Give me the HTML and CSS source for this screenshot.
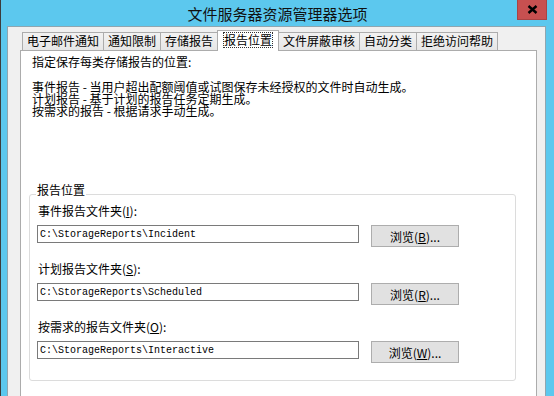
FILE: index.html
```html
<!DOCTYPE html>
<html lang="zh-CN">
<head>
  <meta charset="UTF-8">
  <title>文件服务器资源管理器选项</title>
  <link rel="stylesheet" href="styles.css">
</head>
<body>
  <div class="window">
    <div class="titlebar">
      <h1 class="title">文件服务器资源管理器选项</h1>
      <button class="close" aria-label="关闭">
        <svg width="11" height="9" viewBox="0 0 11 9">
          <path d="M1.5 1 L9.5 8 M9.5 1 L1.5 8" stroke="#000" stroke-width="2.4" fill="none"/>
        </svg>
      </button>
    </div>

    <div class="client">
      <ul class="tabs">
        <li>电子邮件通知</li>
        <li>通知限制</li>
        <li>存储报告</li>
        <li class="active"><span class="focus">报告位置</span></li>
        <li>文件屏蔽审核</li>
        <li>自动分类</li>
        <li>拒绝访问帮助</li>
      </ul>

      <div class="panel">
        <p class="intro">指定保存每类存储报告的位置:</p>
        <ul class="kinds">
          <li>事件报告 - 当用户超出配额阈值或试图保存未经授权的文件时自动生成。</li>
          <li>计划报告 - 基于计划的报告任务定期生成。</li>
          <li>按需求的报告 - 根据请求手动生成。</li>
        </ul>

        <fieldset class="group">
          <legend>报告位置</legend>

          <div class="field">
            <label for="incident">事件报告文件夹(<u>I</u>):</label>
            <div class="row">
              <input class="path" type="text" id="incident" value="C:\StorageReports\Incident">
              <button class="browse">浏览(<u>B</u>)...</button>
            </div>
          </div>

          <div class="field">
            <label for="scheduled">计划报告文件夹(<u>S</u>):</label>
            <div class="row">
              <input class="path" type="text" id="scheduled" value="C:\StorageReports\Scheduled">
              <button class="browse">浏览(<u>R</u>)...</button>
            </div>
          </div>

          <div class="field">
            <label for="interactive">按需求的报告文件夹(<u>O</u>):</label>
            <div class="row">
              <input class="path" type="text" id="interactive" value="C:\StorageReports\Interactive">
              <button class="browse">浏览(<u>W</u>)...</button>
            </div>
          </div>
        </fieldset>
      </div>
    </div>
  </div>
</body>
</html>
```

FILE: styles.css
```css
* {
  box-sizing: border-box;
}

body {
  margin: 0;
  font-family: "Noto Sans CJK SC", sans-serif;
  font-size: 12px;
  color: #000;
  background: #5cc8ee;
}

.window {
  width: 554px;
  height: 396px;
  overflow: hidden;
  display: flex;
  flex-direction: column;
  background: #5cc8ee;
  border-left: 1px solid #3c3c3c;
}

.titlebar {
  display: grid;
  grid-template-columns: 1fr auto 1fr;
  align-items: start;
  height: 26px;
  flex: none;
}

.title {
  grid-column: 2;
  margin: 0;
  font-size: 15px;
  font-weight: normal;
  line-height: 28px;
  color: #111;
}

.close {
  grid-column: 3;
  justify-self: end;
  margin-right: 7px;
  width: 30px;
  height: 20px;
  padding: 0;
  border: 1px solid #a84444;
  border-top: none;
  background: #c75050;
  display: flex;
  align-items: center;
  justify-content: center;
}

.client {
  flex: 1;
  margin: 0 8px 0 6px;
  padding: 3px 8px 0 12px;
  background: #f0f0f0;
  border: 1px solid #8fa6b0;
  border-bottom: none;
}

/* tab strip */
.tabs {
  list-style: none;
  display: flex;
  align-items: flex-end;
  height: 21px;
  margin: 0 0 -1px;
  padding: 0 0 0 2px;
}

.tabs li {
  height: 18px;
  margin: 0 -1px 1px 0;
  padding: 0 4px;
  border: 1px solid #acacac;
  border-bottom: none;
  background: linear-gradient(#f2f2f2, #e6e6e6);
  line-height: 16px;
  white-space: nowrap;
}

.tabs li.active {
  position: relative;
  z-index: 1;
  height: 21px;
  margin-bottom: 0;
  padding: 1px 5px 0;
  background: #fff;
  line-height: 14px;
}

.focus {
  display: inline-block;
  border: 1px dotted #333;
}

.panel {
  height: 360px;
  padding: 4px 0 0;
  background: #fff;
  border: 1px solid #acacac;
}

.intro {
  margin: 0;
  padding: 0 11px;
  line-height: 14px;
}

.kinds {
  list-style: none;
  margin: 12px 0 0;
  padding: 0 11px;
}

.kinds li {
  height: 12px;
  line-height: 12px;
  white-space: nowrap;
}

/* group box */
.group {
  min-width: 0;
  margin: 67px 20px 0 8px;
  padding: 0 7px 17px;
  border: 1px solid #dcdcdc;
  border-radius: 3px;
}

.group legend {
  margin-left: -1px;
  padding: 0 1px 8px;
  line-height: 12px;
}

.field label {
  display: block;
  padding-left: 1px;
  margin-bottom: 7px;
  line-height: 14px;
}

.field + .field {
  margin-top: 15px;
}

.row {
  display: flex;
  align-items: flex-start;
  gap: 12px;
}

.path {
  width: 322px;
  height: 18px;
  margin: 0;
  padding: 0 2px;
  border: 1px solid #7a7a7a;
  border-radius: 0;
  font-family: "Liberation Mono", monospace;
  font-size: 10px;
  color: #000;
  background: #fff;
  outline: none;
}

.browse {
  width: 88px;
  height: 22px;
  margin: 0;
  padding: 0;
  border: 1px solid #adadad;
  border-radius: 0;
  background: #e1e1e1;
  font-family: "Noto Sans CJK SC", sans-serif;
  font-size: 12px;
  color: #000;
}
```
